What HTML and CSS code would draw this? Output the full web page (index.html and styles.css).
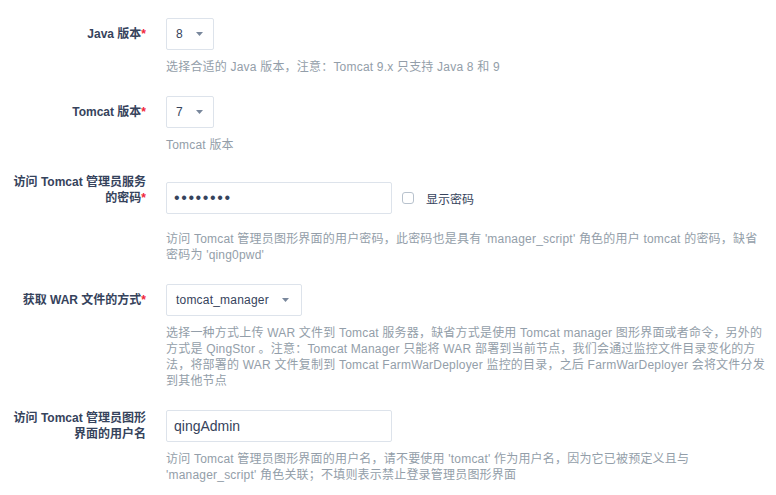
FILE: index.html
```html
<!DOCTYPE html>
<html lang="zh-CN">
<head>
<meta charset="utf-8">
<link rel="stylesheet" href="styles.css">
</head>
<body>
<form class="form">
  <div class="field">
    <label class="label">Java 版本<span class="req">*</span></label>
    <div class="control">
      <div class="select"><span>8</span><svg class="caret" width="7" height="4" viewBox="0 0 7 4"><path d="M0 0h7L3.5 4z"/></svg></div>
    </div>
    <p class="help">选择合适的 Java 版本，注意：Tomcat 9.x 只支持 Java 8 和 9</p>
  </div>

  <div class="field">
    <label class="label">Tomcat 版本<span class="req">*</span></label>
    <div class="control">
      <div class="select"><span>7</span><svg class="caret" width="7" height="4" viewBox="0 0 7 4"><path d="M0 0h7L3.5 4z"/></svg></div>
    </div>
    <p class="help">Tomcat 版本</p>
  </div>

  <div class="field field-top">
    <label class="label">访问 Tomcat 管理员服务的密码<span class="req">*</span></label>
    <div class="control control-tall">
      <input class="input input-password" type="password" value="qing0pwd">
      <span class="check"><span class="box"></span><span class="check-text">显示密码</span></span>
    </div>
    <p class="help">访问 Tomcat 管理员图形界面的用户密码，此密码也是具有 'manager_script' 角色的用户 tomcat 的密码，缺省密码为 'qing0pwd'</p>
  </div>

  <div class="field">
    <label class="label">获取 WAR 文件的方式<span class="req">*</span></label>
    <div class="control">
      <div class="select select-wide"><span>tomcat_manager</span><svg class="caret" width="7" height="4" viewBox="0 0 7 4"><path d="M0 0h7L3.5 4z"/></svg></div>
    </div>
    <p class="help">选择一种方式上传 WAR 文件到 Tomcat 服务器，缺省方式是使用 Tomcat manager 图形界面或者命令，另外的方式是 QingStor 。注意：Tomcat Manager 只能将 WAR 部署到当前节点，我们会通过监控文件目录变化的方法，将部署的 WAR 文件复制到 Tomcat FarmWarDeployer 监控的目录，之后 FarmWarDeployer 会将文件分发到其他节点</p>
  </div>

  <div class="field">
    <label class="label">访问 Tomcat 管理员图形界面的用户名</label>
    <div class="control">
      <input class="input" type="text" value="qingAdmin">
    </div>
    <p class="help">访问 Tomcat 管理员图形界面的用户名，请不要使用 'tomcat' 作为用户名，因为它已被预定义且与 'manager_script' 角色关联；不填则表示禁止登录管理员图形界面</p>
  </div>
</form>
</body>
</html>
```

FILE: styles.css
```css
* { box-sizing: border-box; }
html, body { margin: 0; padding: 0; background: #fff; }
body {
  font-family: "Liberation Sans", "Noto Sans CJK SC", sans-serif;
  font-size: 12px;
  color: #36435c;
}
.form {
  padding: 18px 7px 0 0;
}
.field {
  display: grid;
  grid-template-columns: 146px 1fr;
  column-gap: 20px;
  margin-bottom: 21px;
}
.label {
  grid-column: 1;
  align-self: center;
  justify-self: end;
  width: 140px;
  text-align: right;
  font-weight: bold;
  line-height: 16px;
  color: #36435c;
}
.field-top .label { align-self: start; }
.req { color: #f0263b; }
.control {
  grid-column: 2;
  display: flex;
  align-items: center;
  min-height: 32px;
}
.control-tall { height: 48px; }
.help {
  grid-column: 2;
  margin: 9px 0 0;
  line-height: 16px;
  letter-spacing: 0.2px;
  color: #939ea9;
}
.select {
  display: inline-flex;
  align-items: center;
  gap: 13px;
  height: 32px;
  padding: 0 10px 0 9px;
  border: 1px solid #dde3eb;
  border-radius: 2px;
  font-size: 12px;
  letter-spacing: 0.2px;
  color: #36435c;
}
.select-wide { padding-right: 12px; }
.caret { fill: #79879c; }
.input {
  width: 226px;
  height: 32px;
  padding: 0 7px;
  border: 1px solid #dde3eb;
  border-radius: 2px;
  font-family: "Liberation Sans", "Noto Sans CJK SC", sans-serif;
  font-size: 14px;
  color: #36435c;
  outline: none;
}
.input-password {
  font-size: 16px;
  letter-spacing: 1.6px;
}
.check {
  display: inline-flex;
  align-items: center;
  gap: 12px;
  margin-left: 10px;
}
.box {
  width: 12px;
  height: 12px;
  border: 1px solid #b8c2cd;
  border-radius: 3px;
  background: #fff;
}
.check-text { color: #36435c; font-size: 12px; }
```
